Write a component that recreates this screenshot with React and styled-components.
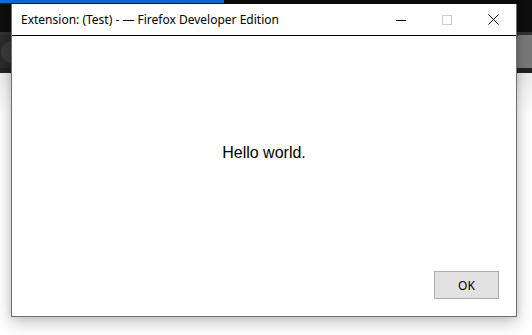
import React from "react";
import styled, { createGlobalStyle } from "styled-components";

const Global = createGlobalStyle`
  html, body {
    margin: 0;
    padding: 0;
    background: #ffffff;
  }
  #root {
    width: 532px;
    height: 335px;
  }
`;

export default function App() {
  return (
    <>
      <Global />
      <Desktop>
        <Backdrop>
          <TabStrip>
            <Progress />
          </TabStrip>
          <NavBar>
            <NavButton />
            <NavEnd />
          </NavBar>
          <NavDivider />
          <PageArea />
        </Backdrop>

        <Window>
          <TitleBar>
            <Title>Extension: (Test) - — Firefox Developer Edition</Title>
            <Controls>
              <CtrlButton>
                <svg width="10" height="10" viewBox="0 0 10 10">
                  <path d="M0 5.5H10" stroke="#000" strokeWidth="1" />
                </svg>
              </CtrlButton>
              <CtrlButton>
                <svg width="10" height="10" viewBox="0 0 10 10">
                  <rect x="0.5" y="0.5" width="9" height="9" fill="none" stroke="#cccccc" strokeWidth="1" />
                </svg>
              </CtrlButton>
              <CtrlButton>
                <svg width="11" height="11" viewBox="0 0 11 11">
                  <path d="M0.5 0.5L10.5 10.5M10.5 0.5L0.5 10.5" stroke="#000" strokeWidth="1" />
                </svg>
              </CtrlButton>
            </Controls>
          </TitleBar>
          <Content>
            <Message>Hello world.</Message>
            <Footer>
              <OkButton>OK</OkButton>
            </Footer>
          </Content>
        </Window>
      </Desktop>
    </>
  );
}

const Desktop = styled.div`
  position: relative;
  width: 532px;
  height: 335px;
  overflow: hidden;
`;

const Backdrop = styled.div`
  display: flex;
  flex-direction: column;
  height: 100%;
`;

const TabStrip = styled.div`
  height: 32px;
  background: #0f0f10;
`;

const Progress = styled.div`
  width: 224px;
  height: 3px;
  background: #0a6fd8;
`;

const NavBar = styled.div`
  display: flex;
  align-items: center;
  justify-content: space-between;
  height: 36px;
  background: #2b2b2d;
  border-top: 3px solid #333336;
  box-sizing: border-box;
`;

const NavButton = styled.div`
  width: 22px;
  height: 22px;
  margin-left: 1px;
  border-radius: 50%;
  background: #3b3b3d;
`;

const NavEnd = styled.div`
  width: 24px;
  height: 100%;
  background: linear-gradient(135deg, #5a5a5a 0 20%, #7a7a7a 20%);
`;

const NavDivider = styled.div`
  height: 5px;
  background: #222224;
`;

const PageArea = styled.div`
  flex: 1;
  background: linear-gradient(180deg, #ececec 0, #ffffff 40px);
`;

const Window = styled.div`
  position: absolute;
  left: 11px;
  top: 4px;
  width: 506px;
  height: 313px;
  box-sizing: border-box;
  display: flex;
  flex-direction: column;
  background: #ffffff;
  border: 1px solid #707070;
  border-top: none;
  box-shadow: 0 6px 16px rgba(0, 0, 0, 0.22), 0 0 8px rgba(0, 0, 0, 0.12);
`;

const TitleBar = styled.div`
  display: flex;
  align-items: center;
  height: 31px;
  border-bottom: 1px solid #000;
  background: #ffffff;
`;

const Title = styled.div`
  flex: 1;
  padding-left: 9px;
  font-family: "Noto Sans", "DejaVu Sans", sans-serif;
  font-size: 12px;
  color: #000;
  white-space: nowrap;
`;

const Controls = styled.div`
  display: flex;
  height: 100%;
`;

const CtrlButton = styled.div`
  display: flex;
  align-items: center;
  justify-content: center;
  width: 46px;
  height: 100%;
`;

const Content = styled.div`
  flex: 1;
  display: flex;
  flex-direction: column;
  padding-top: 108px;
`;

const Message = styled.div`
  flex: 1;
  text-align: center;
  font-family: "Liberation Sans", Arial, sans-serif;
  font-size: 16px;
  color: #000;
`;

const Footer = styled.div`
  display: flex;
  justify-content: flex-end;
  padding: 0 17px 17px 0;
`;

const OkButton = styled.div`
  display: flex;
  align-items: center;
  justify-content: center;
  width: 65px;
  height: 28px;
  box-sizing: border-box;
  background: #e1e1e1;
  border: 1px solid #adadad;
  font-family: "Noto Sans", "DejaVu Sans", sans-serif;
  font-size: 12px;
  color: #000;
`;
